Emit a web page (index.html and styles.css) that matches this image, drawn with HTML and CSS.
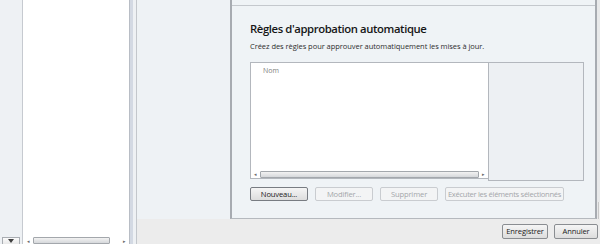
FILE: index.html
```html
<!DOCTYPE html>
<html lang="fr">
<head>
<meta charset="utf-8">
<title>Règles d'approbation automatique</title>
<link rel="stylesheet" href="styles.css">
</head>
<body>
<div class="app">
  <div class="col-nav">
    <div class="dd"><span class="dd-arrow"></span></div>
  </div>
  <div class="col-list">
    <div class="list-fill"></div>
    <div class="hscroll small">
      <span class="arr">◂</span>
      <span class="thumb"></span>
      <span class="arr">▸</span>
    </div>
  </div>
  <div class="splitter"></div>
  <div class="col-main">
    <div class="main-top">
      <div class="side-panel"></div>
      <div class="panel">
        <div class="panel-prev"></div>
        <div class="panel-body">
          <h2 class="title">Règles d'approbation automatique</h2>
          <p class="subtitle">Créez des règles pour approuver automatiquement les mises à jour.</p>
          <div class="rules">
            <div class="rules-list">
              <div class="rules-head">Nom</div>
              <div class="rules-fill"></div>
              <div class="hscroll">
                <span class="arr">◂</span>
                <span class="thumb"></span>
                <span class="arr">▸</span>
              </div>
            </div>
            <div class="rules-side"></div>
          </div>
          <div class="btn-row">
            <button class="btn w58">Nouveau...</button>
            <button class="btn w58" disabled>Modifier...</button>
            <button class="btn w58" disabled>Supprimer</button>
            <button class="btn w119 tight" disabled>Exécuter les éléments sélectionnés</button>
          </div>
        </div>
      </div>
      <div class="edge"><div class="edge-bar"></div></div>
    </div>
    <div class="footer">
      <button class="btn foot w45">Enregistrer</button>
      <button class="btn foot w44">Annuler</button>
    </div>
  </div>
</div>
</body>
</html>
```
FILE: styles.css
```css
* { box-sizing: border-box; }
html, body { margin: 0; padding: 0; }
body {
  width: 600px;
  height: 244px;
  overflow: hidden;
  font-family: "Open Sans", "Noto Sans", sans-serif;
  color: #1e1e1e;
  background: #eef1f4;
}
.app {
  display: flex;
  height: 244px;
}
.col-nav {
  width: 23px;
  background: #eef1f4;
  border-right: 1px solid #c6cad0;
  display: flex;
  flex-direction: column;
  justify-content: flex-end;
  padding: 0 2px 0 2px;
}
.dd {
  height: 7px;
  width: 18px;
  border: 1px solid #a9adb2;
  border-bottom: none;
  background: linear-gradient(#fbfbfb, #e9e9e9);
  display: flex;
  justify-content: center;
  padding-top: 1px;
}
.dd-arrow {
  width: 0; height: 0;
  border-left: 3px solid transparent;
  border-right: 3px solid transparent;
  border-top: 4px solid #404040;
}
.col-list {
  width: 107px;
  background: #fff;
  border-right: 1px solid #b8bdc5;
  display: flex;
  flex-direction: column;
}
.list-fill { flex: 1; }
.splitter {
  width: 7px;
  background: linear-gradient(to right, #d3d9e3 0, #d3d9e3 3px, #eef1f4 3px, #eef1f4 6px, #c3c7cc 6px);
}
.col-main {
  flex: 1;
  display: flex;
  flex-direction: column;
}
.main-top {
  height: 219px;
  display: flex;
}
.side-panel {
  width: 93px;
  background: #eef2f5;
}
.panel {
  width: 367px;
  background: #eff3f6;
  border-left: 2px solid #a7abb1;
  border-right: 2px solid #a7abb1;
  border-bottom: 1px solid #b5b9be;
  display: flex;
  flex-direction: column;
}
.panel-prev {
  height: 6px;
  border-bottom: 1px solid #c4c8cd;
}
.panel-body {
  padding: 15px 0 0 18px;
}
.title {
  margin: 0 0 4px 0;
  font-size: 11.3px;
  line-height: 16px;
  font-weight: 600;
  letter-spacing: -0.4px;
  color: #161616;
}
.subtitle {
  margin: 0;
  font-size: 7.5px;
  line-height: 11px;
  letter-spacing: -0.05px;
  color: #2e2e2e;
}
.rules {
  margin-top: 10px;
  width: 334px;
  display: flex;
  align-items: flex-start;
}
.rules-list {
  width: 238px;
  height: 117px;
  background: #fff;
  border: 1px solid #b3b7bd;
  border-right: none;
  display: flex;
  flex-direction: column;
}
.rules-head {
  padding: 3px 0 0 12px;
  font-size: 7px;
  line-height: 10px;
  color: #808080;
}
.rules-fill { flex: 1; }
.rules-side {
  width: 96px;
  height: 119px;
  background: #edf0f3;
  border: 1px solid #b3b7bd;
}
.hscroll {
  height: 8px;
  display: flex;
  align-items: center;
  padding: 0 2px;
  gap: 2px;
}
.hscroll .arr {
  font-size: 5px;
  line-height: 8px;
  width: 5px;
  text-align: center;
  color: #6a6a6a;
}
.hscroll .thumb {
  flex: 1;
  height: 7px;
  border: 1px solid #a3a7ac;
  border-radius: 1px;
  background: linear-gradient(#f2f2f2, #d6d8db);
}
.hscroll.small { height: 7px; padding: 0 2px 0 3px; }
.hscroll.small .thumb { flex: none; width: 77px; height: 7px; }
.hscroll.small .arr:last-child { margin-left: auto; }
.btn-row {
  margin-top: 6px;
  display: flex;
  gap: 7px;
}
.btn {
  height: 14px;
  padding: 0;
  font-family: "Open Sans", "Noto Sans", sans-serif;
  font-size: 7.6px;
  line-height: 12px;
  letter-spacing: -0.15px;
  color: #1a1a1a;
  border: 1px solid #787c82;
  border-radius: 2px;
  background: linear-gradient(#f5f5f5, #dddddd);
  text-align: center;
  white-space: nowrap;
  overflow: hidden;
}
.btn.tight { letter-spacing: -0.3px; }
.btn:disabled {
  color: #a3a6aa;
  border-color: #c9ccd0;
  background: #f3f4f5;
}
.w58 { width: 58px; }
.w119 { width: 119px; }
.w45 { width: 46px; }
.w44 { width: 44px; }
.edge {
  flex: 1;
  background: #e8e9ea;
  display: flex;
  flex-direction: column;
  justify-content: flex-end;
}
.edge-bar {
  height: 17px;
  margin-left: 1px;
  border-left: 1px solid #c8c8c8;
  background: #f0f0f0;
}
.footer {
  flex: 1;
  background: #ececec;
  display: flex;
  justify-content: flex-end;
  align-items: flex-start;
  padding: 5px 2px 0 0;
  gap: 6px;
}
.btn.foot {
  height: 15px;
  line-height: 13px;
  border-color: #8a8d91;
}
```
